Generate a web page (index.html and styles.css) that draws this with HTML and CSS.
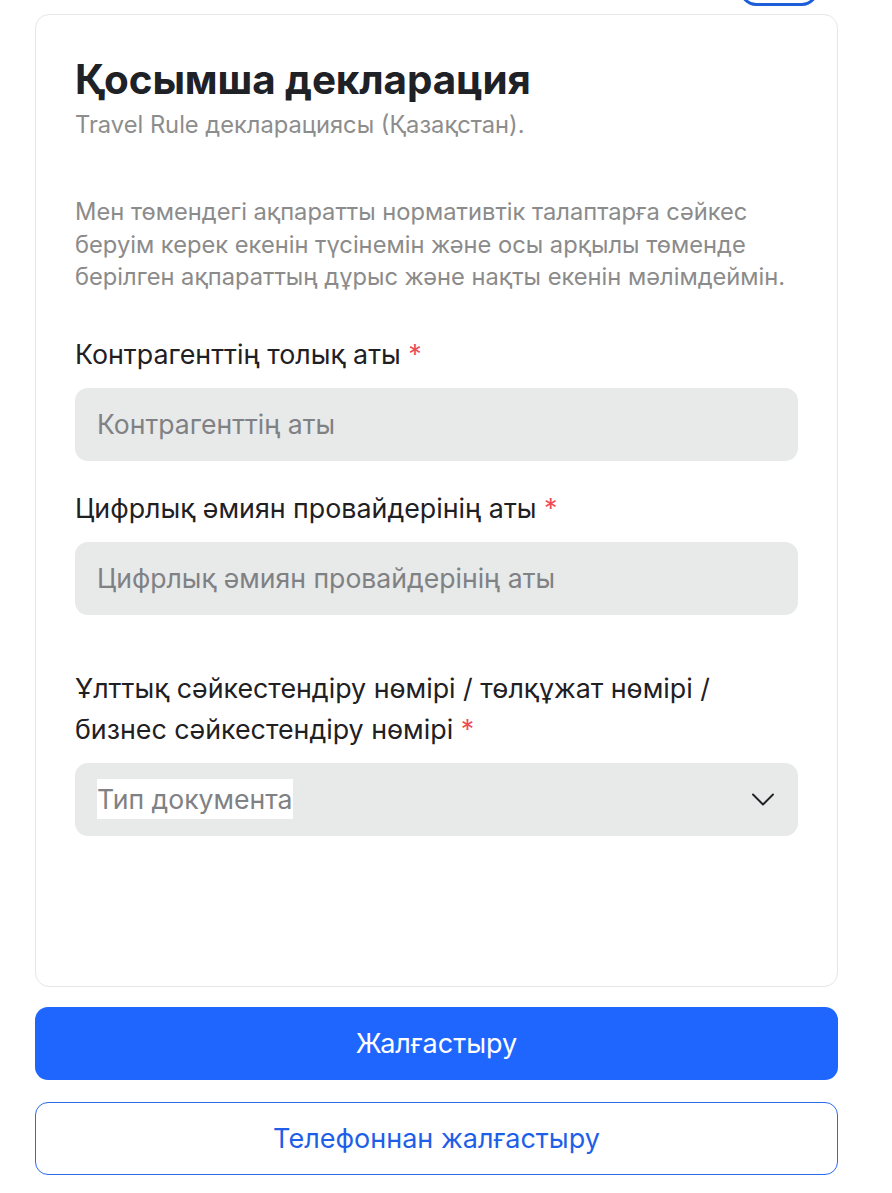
FILE: index.html
```html
<!DOCTYPE html>
<html lang="kk">
<head>
<meta charset="utf-8">
<link rel="stylesheet" href="styles.css">
</head>
<body>
<div class="page">
  <div class="topbar"><div class="pill"></div></div>
  <div class="card">
    <h1 class="title">Қосымша декларация</h1>
    <p class="subtitle">Travel Rule декларациясы (Қазақстан).</p>
    <p class="intro">Мен төмендегі ақпаратты нормативтік талаптарға сәйкес беруім керек екенін түсінемін және осы арқылы төменде берілген ақпараттың дұрыс және нақты екенін мәлімдеймін.</p>
    <div class="field field-first">
      <label class="label">Контрагенттің толық аты <span class="req">*</span></label>
      <div class="input"><span class="ph">Контрагенттің аты</span></div>
    </div>
    <div class="field field-second">
      <label class="label">Цифрлық әмиян провайдерінің аты <span class="req">*</span></label>
      <div class="input"><span class="ph">Цифрлық әмиян провайдерінің аты</span></div>
    </div>
    <div class="field field-third">
      <label class="label">Ұлттық сәйкестендіру нөмірі / төлқұжат нөмірі / бизнес сәйкестендіру нөмірі <span class="req">*</span></label>
      <div class="input select"><span class="ph ph-hl">Тип документа</span>
        <svg class="chev" width="26" height="26" viewBox="0 0 26 26"><path d="M3 8.5l10 10 10-10" fill="none" stroke="#202124" stroke-width="1.9" stroke-linecap="round" stroke-linejoin="round"/></svg>
      </div>
    </div>
  </div>
  <button class="btn btn-primary">Жалғастыру</button>
  <button class="btn btn-outline">Телефоннан жалғастыру</button>
</div>
</body>
</html>
```
FILE: styles.css
```css
* { box-sizing: border-box; }
html, body { margin: 0; background: #fff; }
body { font-family: Inter, "Liberation Sans", sans-serif; color: #1f2024; }
.page { padding: 0 54px 0 35px; width: 892px; }
.topbar { display: flex; justify-content: flex-end; height: 6px; padding-right: 20px; }
.pill { width: 78px; height: 40px; margin-top: -34px; border: 3px solid #1d5fd8; border-radius: 16px; }
.card { margin-top: 8px; border: 1.5px solid #e6e6e6; border-radius: 14px; padding: 41px 39px 0 39px; height: 973px; }
.title { margin: 0; font-size: 40.4px; font-weight: 700; line-height: 48px; color: #1e2126; letter-spacing: -0.1px; }
.subtitle { margin: 6px 0 0; font-size: 23.7px; line-height: 30px; color: #8d8d8d; }
.intro { margin: 56px 0 0; font-size: 23.7px; line-height: 32.5px; color: #8b8b8b; }
.field-first { margin-top: 40px; }
.field-second { margin-top: 27px; }
.field-third { margin-top: 53px; }
.label { display: block; font-size: 26.8px; line-height: 41px; color: #1f2024; }
.req { color: #f04b55; }
.input { margin-top: 13px; height: 73px; background: #e8e9e9; border-radius: 13px; display: flex; align-items: center; padding: 0 22px; }
.ph { font-size: 26.6px; color: #7f8184; }
.select { justify-content: space-between; padding-right: 22px; }
.ph-hl { background: #fff; line-height: 40px; }
.chev { display: block; }
.btn { display: block; width: 803px; height: 73px; border-radius: 13px; font-family: Inter, "Liberation Sans", sans-serif; font-size: 27px; cursor: pointer; }
.btn-primary { margin-top: 20px; background: #1f66ff; color: #fff; border: none; }
.btn-outline { margin-top: 22px; background: #fff; color: #1f5fe8; border: 1.5px solid #2a6af0; }
```
